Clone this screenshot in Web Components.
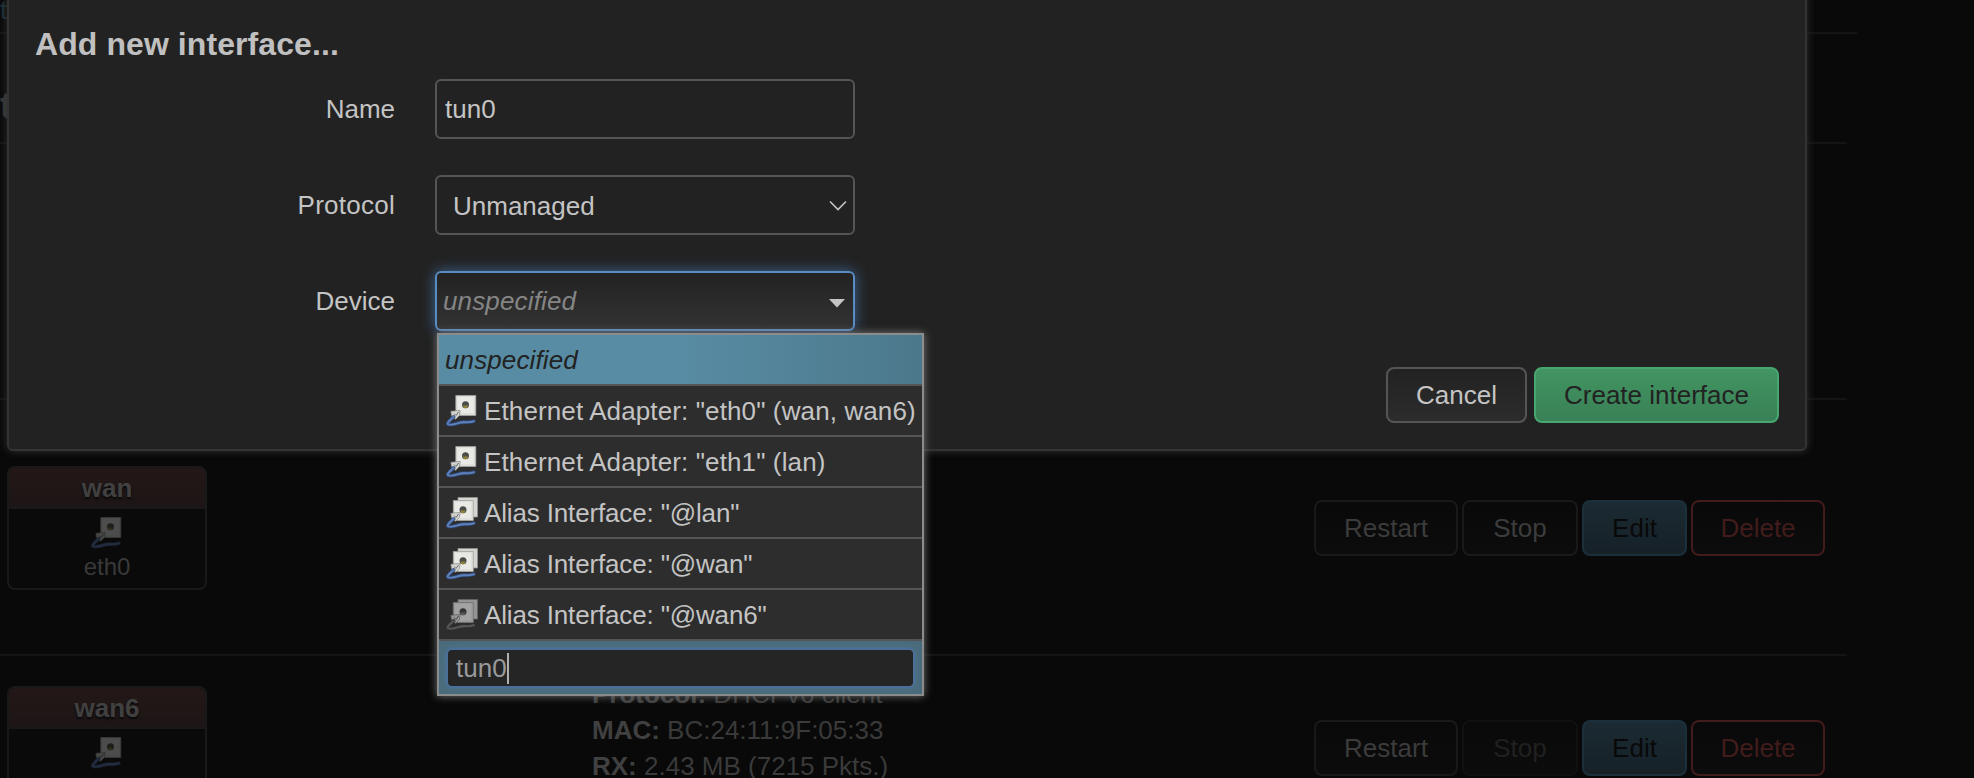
<!DOCTYPE html>
<html lang="en"><head><meta charset="utf-8"><title>Interfaces</title>
<style>
html,body{margin:0;height:100%}
body{background:#090909;overflow:hidden;font:26px/36px "Liberation Sans",Arial,sans-serif;color:#3a3a3a}
</style></head><body>
<net-page></net-page>
<script>
const define = (name, html) => {
  const t = document.createElement('template');
  t.innerHTML = html;
  customElements.define(name, class extends HTMLElement {
    constructor(){ super(); this.attachShadow({mode:'open'}).append(t.content.cloneNode(true)); }
  });
};

define('net-icon', `<style>
:host{display:block;width:32px;height:32px;flex:none}
svg{display:block;width:32px;height:32px}
.back{display:none}
:host([alias]) .back{display:block}
:host([alias]) .plate{transform:translate(-2.500px,3px)}
:host([down]){filter:grayscale(1) brightness(.7)}
</style>
<svg viewBox="0 0 32 32" fill="none">
<path class="back" d="M12 .5h19.500v19.500H12z" fill="#d4d4d0" stroke="#92928e" stroke-width=".8"/>
<g class="plate"><path d="M9.800 .5h20v20h-20z" fill="#dededb" stroke="#a2a29e" stroke-width=".8"/>
<path d="M11.500 2h16v16h-16z" fill="#e9e9e6"/>
<circle cx="19.500" cy="9.800" r="3.500" fill="#4c4c4a"/><path d="M16.800 10.500h5.400q-.7 2.800-2.700 2.800t-2.700-2.800z" fill="#8f8338"/></g>
<path d="M4.800 16.200l9.400-.7-.8 5-3.600 3.700-4-1.400z" fill="#d6d6d2" stroke="#80807c" stroke-width=".7"/>
<path d="M8 18.500l2 2 2.500-3.500" stroke="#666" stroke-width="1"/>
<path d="M7.500 22C5 24.500 .8 27.500 1.800 29s7.500 0 12-1.300 8 .6 14-1.400" stroke="#2d4672" stroke-width="3.800" stroke-linecap="round"/>
<path d="M7.500 22C5 24.500 .8 27.500 1.800 29s7.500 0 12-1.300 8 .6 14-1.400" stroke="#5d7fba" stroke-width="2.200" stroke-linecap="round"/>
</svg>`);

define('net-button', `<style>
:host{display:flex;align-items:center;justify-content:center;box-sizing:border-box;height:56px;border:2px solid #191919;border-radius:8px;color:#3c3c3c;background:linear-gradient(#090909,#0c0c0c);white-space:nowrap;width:var(--w,auto)}
:host([kind=edit]){border-color:#1b303b;background:linear-gradient(#1b2a33,#162127);color:#090909}
:host([kind=delete]){border-color:#421c1c;color:#421c1c}
:host([kind=cancel]){border-color:#555;color:#c4c4c4;background:linear-gradient(#222,#2c2c2c)}
:host([kind=create]){border-color:#48a670;color:#222;background:linear-gradient(#429562,#398056)}
</style><slot></slot>`);

define('net-badge', `<style>
:host{display:block;box-sizing:border-box;width:200px;height:124px;border:2px solid #191919;border-radius:8px;overflow:hidden;text-align:center;background:#0a0a0a}
.head{height:39px;line-height:40px;border-bottom:2px solid #191919;background:linear-gradient(#231817,#1d1516);font-weight:bold;color:#414141;text-shadow:0 2px 2px #090909}
net-icon{margin:8px auto 1px;opacity:.3}
.dev{font-size:24px;line-height:34px;color:#3a3a3a}
</style><div class="head"><slot name="head"></slot></div><net-icon></net-icon><div class="dev"><slot></slot></div>`);

define('net-row', `<style>
:host{display:grid;grid-template-columns:585px 1fr auto;align-items:center;box-sizing:border-box;height:256px;width:1847px;padding:2px 22px 0 7px;border-bottom:2px solid #141414}
:host([short]){height:184px;border:0;padding-top:0}
.actions{display:flex;gap:4px}
</style><slot name="badge"></slot><div><slot></slot></div><div class="actions"><slot name="actions"></slot></div>`);

define('net-actions', `<style>
:host{display:flex;gap:4px}
.restart{--w:144px}.stop{--w:116px}.edit{--w:105px}.delete{--w:134px}
:host([stopped]) .stop{border-color:#111;color:#202020}
</style><net-button class="restart">Restart</net-button><net-button class="stop">Stop</net-button><net-button class="edit" kind="edit">Edit</net-button><net-button class="delete" kind="delete">Delete</net-button>`);

define('net-field', `<style>
:host{display:grid;grid-template-columns:386px 420px;column-gap:40px;height:60px;margin-bottom:36px;align-items:center}
label{text-align:right}
.box{box-sizing:border-box;width:420px;height:60px;border:2px solid #555;border-radius:6px;display:flex;align-items:center;justify-content:space-between;padding:0 8px}
:host([kind=select]) .box{padding:2px 6px 0 16px}
:host([kind=dropdown]) .box{border-color:#5a8cc4;background:linear-gradient(#222,#333);box-shadow:0 0 14px rgba(82,148,226,.6);padding:0 7px 0 6px;color:#858585;font-style:italic;letter-spacing:.15px}
svg{display:none}
:host([kind=select]) .chev,:host([kind=dropdown]) .tri{display:block}
.tri{margin-top:4px}
</style><label><slot name="label"></slot></label><div class="box"><span><slot></slot></span>
<svg class="chev" width="18" height="12" viewBox="0 0 18 12"><path d="M1 1.500l8 8 8-8" fill="none" stroke="#c4c4c4" stroke-width="1.600"/></svg>
<svg class="tri" width="18" height="9" viewBox="0 0 18 9"><path d="M1 0h16L9 8.500z" fill="#c4c4c4"/></svg></div>`);

define('net-option', `<style>
:host{display:flex;align-items:center;gap:6px;box-sizing:border-box;height:51px;padding:0 0 0 7px;border-bottom:2px solid #555;background:#2d2d2d;color:#c4c4c4;white-space:nowrap;letter-spacing:.12px}
:host([alias]){letter-spacing:-.15px}
:host([selected]){background:linear-gradient(90deg,#588ca4 50%,#4c788b);color:#222;font-style:italic;padding-left:6px}
</style><slot name="icon"></slot><span><slot></slot></span>`);

define('net-options', `<style>
:host{display:block;position:absolute;left:437px;top:333px;width:487px;height:363px;box-sizing:border-box;border:2px solid #8c8c8c;background:#2d2d2d;box-shadow:0 0 8px #777}
.entry{box-sizing:border-box;height:53px;padding:7px;background:#4a6b7b;}
.input{box-sizing:border-box;height:40px;border:2px solid #4a7099;border-radius:6px;background:#252525;box-shadow:0 0 8px rgba(82,130,170,.5);color:#999;display:flex;align-items:center;padding-left:8px}
.caret{width:2px;height:31px;background:#b0b0b0}
</style>
<net-option selected>unspecified</net-option>
<net-option><net-icon slot="icon"></net-icon>Ethernet Adapter: "eth0" (wan, wan6)</net-option>
<net-option><net-icon slot="icon"></net-icon>Ethernet Adapter: "eth1" (lan)</net-option>
<net-option alias><net-icon slot="icon" alias></net-icon>Alias Interface: "@lan"</net-option>
<net-option alias><net-icon slot="icon" alias></net-icon>Alias Interface: "@wan"</net-option>
<net-option alias><net-icon slot="icon" alias down></net-icon>Alias Interface: "@wan6"</net-option>
<div class="entry"><div class="input"><span>tun0</span><i class="caret"></i></div></div>`);

define('net-modal', `<style>
:host{display:block;position:absolute;left:7px;top:-10px;box-sizing:border-box;width:1800px;height:461px;border:2px solid #333;border-radius:6px;background:#222;box-shadow:0 0 8px #333;color:#c4c4c4;padding:33px 26px 0 0}
h4{margin:0 0 16px 26px;font-size:32px;line-height:38px;font-weight:bold;color:#c0c0c0;letter-spacing:.08px}
.buttons{display:flex;justify-content:flex-end;gap:7px}
.cancel{--w:141px}.create{--w:245px}
</style><h4>Add new interface...</h4>
<net-field><span slot="label">Name</span>tun0</net-field>
<net-field kind="select"><span slot="label" style="letter-spacing:.25px">Protocol</span>Unmanaged</net-field>
<net-field kind="dropdown"><span slot="label">Device</span>unspecified</net-field>
<div class="buttons"><net-button class="cancel" kind="cancel">Cancel</net-button><net-button class="create" kind="create">Create interface</net-button></div>`);

define('net-page', `<style>
:host{display:block;position:relative;height:778px;overflow:hidden}
.tabs{box-sizing:border-box;height:34px;width:1857px;border-bottom:2px solid #141414;color:#1b303b;line-height:20px}
h3{margin:0;box-sizing:border-box;height:110px;width:1847px;border-bottom:2px solid #141414;font-size:36px;line-height:144px}
.info{white-space:nowrap;height:144px}
.info b{color:#404040}
</style>
<div class="tabs">t</div><h3>t</h3>
<net-row><net-button slot="actions" kind="delete" style="--w:134px">Delete</net-button></net-row>
<net-row><net-badge slot="badge"><span slot="head">wan</span>eth0</net-badge>
<net-actions slot="actions"></net-actions></net-row>
<net-row short><net-badge slot="badge"><span slot="head">wan6</span></net-badge>
<div class="info"><b>Protocol:</b> DHCPv6 client<br><b>MAC:</b> BC:24:11:9F:05:33<br><b>RX:</b> 2.43 MB (7215 Pkts.)</div>
<net-actions slot="actions" stopped></net-actions></net-row>
<net-modal></net-modal><net-options></net-options>`);
</script></body></html>
